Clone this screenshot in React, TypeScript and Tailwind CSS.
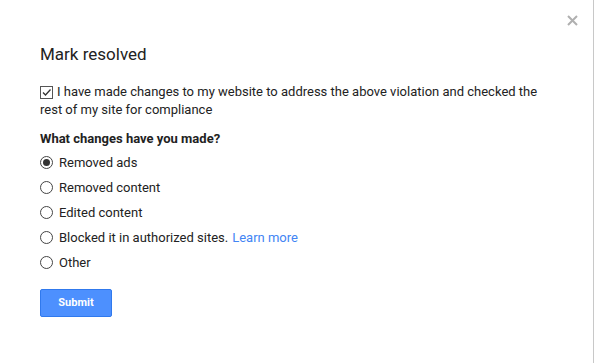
import React from "react";

const options = [
  "Removed ads",
  "Removed content",
  "Edited content",
  "Blocked it in authorized sites.",
  "Other",
];

function Radio({ checked }: { checked: boolean }) {
  return (
    <span className="flex h-[13px] w-[13px] shrink-0 items-center justify-center rounded-full border border-[#444] bg-white">
      {checked && <span className="h-[7px] w-[7px] rounded-full bg-[#333]" />}
    </span>
  );
}

export default function App() {
  return (
    <div
      className="relative h-[363px] w-[595px] overflow-hidden bg-white text-[#222]"
      style={{ fontFamily: "Roboto, Arial, sans-serif" }}
    >
      <div className="h-full w-[594px] border-r border-[#c8c8c8] px-[40px] pt-[42px]">
        <button className="absolute right-[17px] top-[14px] flex h-[12px] w-[12px] items-center justify-center">
          <svg width="11" height="11" viewBox="0 0 11 11">
            <path d="M1 1 L10 10 M10 1 L1 10" stroke="#b0b0b0" strokeWidth="2" />
          </svg>
        </button>
        <h1 className="text-[17px] leading-[24px] text-[#222]">Mark resolved</h1>
        <div className="mt-[17px] flex items-start gap-[4px] text-[13px] leading-[18px]">
          <p>
            <span className="mr-[4px] inline-flex h-[13px] w-[13px] translate-y-[2px] items-center justify-center border border-[#555] bg-white align-baseline">
              <svg width="11" height="11" viewBox="0 0 11 11">
                <path d="M2 5.5 L4.5 8 L9.5 2.5" fill="none" stroke="#333" strokeWidth="1.3" />
              </svg>
            </span>
            I have made changes to my website to address the above violation and checked the rest of my site for compliance
          </p>
        </div>
        <div className="mt-[11px] text-[13px] font-bold leading-[18px] text-[#222]">
          What changes have you made?
        </div>
        <div className="mt-[2px] flex flex-col">
          {options.map((o, i) => (
            <label key={o} className="flex h-[25px] items-center gap-[6px] text-[13px]">
              <Radio checked={i === 0} />
              <span>
                {o}
                {i === 3 && <span className="ml-[4px] text-[#4285f4]">Learn more</span>}
              </span>
            </label>
          ))}
        </div>
        <button className="mt-[14px] h-[28px] w-[72px] rounded-[2px] border border-[#3079ed] bg-[#4d90fe] text-[11px] font-bold text-white">
          Submit
        </button>
      </div>
    </div>
  );
}
